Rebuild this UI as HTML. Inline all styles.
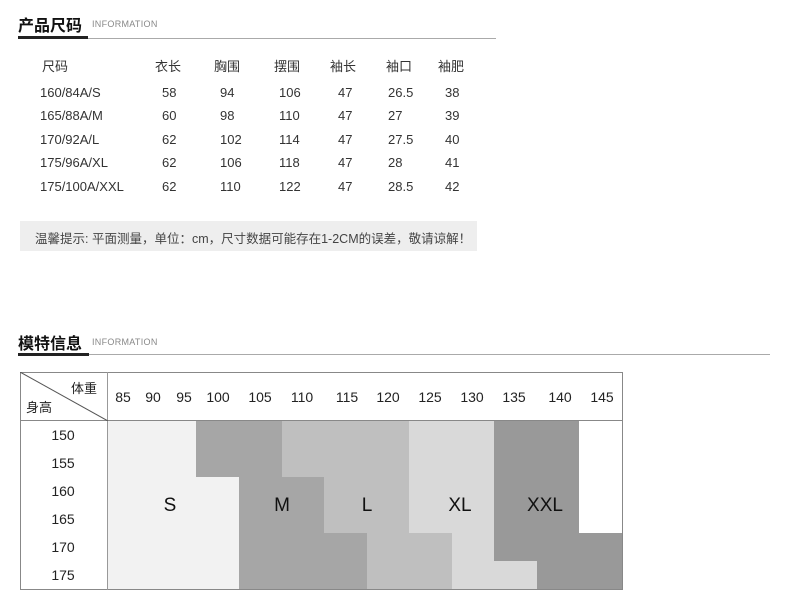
<!DOCTYPE html>
<html><head><meta charset="utf-8"><style>
*{margin:0;padding:0;box-sizing:border-box}
body{width:790px;height:607px;background:#fff;position:relative;overflow:hidden;font-family:"Liberation Sans","Noto Sans CJK SC",sans-serif;color:#333}
.a{position:absolute;white-space:nowrap}
.t{font-size:16px;font-weight:bold;color:#111}
.i{font-size:9px;color:#888;letter-spacing:.3px}
.c{font-size:13px;color:#333}
.n{font-size:14px;color:#222;transform:translateX(-50%)}
.r{font-size:14px;color:#222;transform:translateX(-50%)}
.b{position:absolute}
.L{font-size:19px;color:#111;transform:translate(-50%,-50%)}
</style></head><body>
<div class="a t" style="left:18px;top:12px">产品尺码</div>
<div class="a i" style="left:92px;top:19px">INFORMATION</div>
<div class="b" style="left:18px;top:38px;width:478px;height:1px;background:#aaa"></div>
<div class="b" style="left:18px;top:36px;width:70px;height:3px;background:#222"></div>

<div class="a c" style="left:42px;top:56px">尺码</div>
<div class="a c" style="left:155px;top:56px">衣长</div>
<div class="a c" style="left:214px;top:56px">胸围</div>
<div class="a c" style="left:274px;top:56px">摆围</div>
<div class="a c" style="left:330px;top:56px">袖长</div>
<div class="a c" style="left:386px;top:56px">袖口</div>
<div class="a c" style="left:438px;top:56px">袖肥</div>

<div class="a c" style="left:40px;top:81px;line-height:1.8">160/84A/S<br>165/88A/M<br>170/92A/L<br>175/96A/XL<br>175/100A/XXL</div>
<div class="a c" style="left:162px;top:81px;line-height:1.8">58<br>60<br>62<br>62<br>62</div>
<div class="a c" style="left:220px;top:81px;line-height:1.8">94<br>98<br>102<br>106<br>110</div>
<div class="a c" style="left:279px;top:81px;line-height:1.8">106<br>110<br>114<br>118<br>122</div>
<div class="a c" style="left:338px;top:81px;line-height:1.8">47<br>47<br>47<br>47<br>47</div>
<div class="a c" style="left:388px;top:81px;line-height:1.8">26.5<br>27<br>27.5<br>28<br>28.5</div>
<div class="a c" style="left:445px;top:81px;line-height:1.8">38<br>39<br>40<br>41<br>42</div>

<div class="b" style="left:20px;top:221px;width:457px;height:30px;background:#eee"></div>
<div class="a" style="left:35px;top:228px;font-size:12.5px;color:#444">温馨提示: 平面测量，单位：cm，尺寸数据可能存在1-2CM的误差，敬请谅解！</div>

<div class="a t" style="left:18px;top:330px">模特信息</div>
<div class="a i" style="left:92px;top:337px">INFORMATION</div>
<div class="b" style="left:18px;top:354px;width:752px;height:1px;background:#aaa"></div>
<div class="b" style="left:18px;top:353px;width:71px;height:3px;background:#222"></div>

<div class="b" style="left:20px;top:372px;width:603px;height:218px;border:1px solid #888"></div>
<div class="b" style="left:20px;top:420px;width:603px;height:1px;background:#888"></div>
<div class="b" style="left:107px;top:372px;width:1px;height:218px;background:#999"></div>
<svg class="b" style="left:20px;top:372px" width="88" height="49"><line x1="0" y1="0" x2="88" y2="49" stroke="#555" stroke-width="1"/></svg>
<div class="a" style="left:71px;top:378px;font-size:13px;color:#222">体重</div>
<div class="a" style="left:26px;top:397px;font-size:13px;color:#222">身高</div>

<div class="b" style="left:108px;top:421px;width:88px;height:168px;background:#f2f2f2"></div>
<div class="b" style="left:196px;top:477px;width:43px;height:112px;background:#f2f2f2"></div>
<div class="b" style="left:196px;top:421px;width:86px;height:56px;background:#a6a6a6"></div>
<div class="b" style="left:239px;top:477px;width:85px;height:56px;background:#a6a6a6"></div>
<div class="b" style="left:239px;top:533px;width:128px;height:56px;background:#a6a6a6"></div>
<div class="b" style="left:282px;top:421px;width:127px;height:56px;background:#bfbfbf"></div>
<div class="b" style="left:324px;top:477px;width:85px;height:56px;background:#bfbfbf"></div>
<div class="b" style="left:367px;top:533px;width:85px;height:56px;background:#bfbfbf"></div>
<div class="b" style="left:409px;top:421px;width:85px;height:112px;background:#d9d9d9"></div>
<div class="b" style="left:452px;top:533px;width:42px;height:28px;background:#d9d9d9"></div>
<div class="b" style="left:452px;top:561px;width:85px;height:28px;background:#d9d9d9"></div>
<div class="b" style="left:494px;top:421px;width:85px;height:140px;background:#999"></div>
<div class="b" style="left:537px;top:561px;width:85px;height:28px;background:#999"></div>
<div class="b" style="left:579px;top:533px;width:43px;height:28px;background:#999"></div>

<div class="a L" style="left:170px;top:506px">S</div>
<div class="a L" style="left:282px;top:506px">M</div>
<div class="a L" style="left:367px;top:506px">L</div>
<div class="a L" style="left:460px;top:506px">XL</div>
<div class="a L" style="left:545px;top:506px">XXL</div>

<div class="a n" style="left:123px;top:389px">85</div>
<div class="a n" style="left:153px;top:389px">90</div>
<div class="a n" style="left:184px;top:389px">95</div>
<div class="a n" style="left:218px;top:389px">100</div>
<div class="a n" style="left:260px;top:389px">105</div>
<div class="a n" style="left:302px;top:389px">110</div>
<div class="a n" style="left:347px;top:389px">115</div>
<div class="a n" style="left:388px;top:389px">120</div>
<div class="a n" style="left:430px;top:389px">125</div>
<div class="a n" style="left:472px;top:389px">130</div>
<div class="a n" style="left:514px;top:389px">135</div>
<div class="a n" style="left:560px;top:389px">140</div>
<div class="a n" style="left:602px;top:389px">145</div>

<div class="a r" style="left:63px;top:427px">150</div>
<div class="a r" style="left:63px;top:455px">155</div>
<div class="a r" style="left:63px;top:483px">160</div>
<div class="a r" style="left:63px;top:511px">165</div>
<div class="a r" style="left:63px;top:539px">170</div>
<div class="a r" style="left:63px;top:567px">175</div>
</body></html>
